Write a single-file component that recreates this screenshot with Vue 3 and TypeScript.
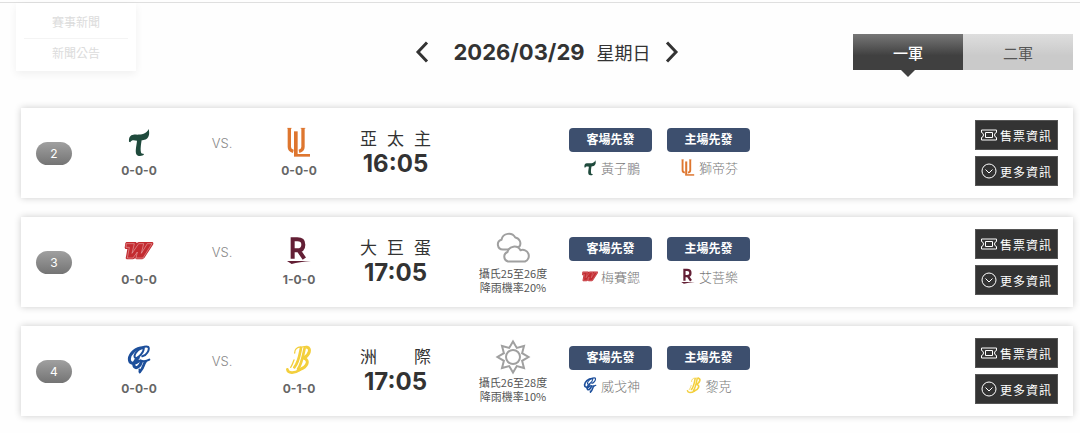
<script setup lang="ts">
import { ref } from 'vue'

type Team = 'tsg' | 'lions' | 'dragons' | 'monkeys' | 'guardians' | 'brothers'

interface Side {
  team: Team
  name: string
  record: string
  pitcher: string
}

interface Game {
  no: number
  away: Side
  home: Side
  venue: string
  time: string
  weather?: { icon: 'cloud' | 'sun'; temp: string; rain: string }
}

const games: Game[] = [
  {
    no: 2,
    away: { team: 'tsg', name: '台鋼雄鷹', record: '0-0-0', pitcher: '黃子鵬' },
    home: { team: 'lions', name: '統一獅', record: '0-0-0', pitcher: '獅帝芬' },
    venue: '亞太主',
    time: '16:05',
  },
  {
    no: 3,
    away: { team: 'dragons', name: '味全龍', record: '0-0-0', pitcher: '梅賽鍶' },
    home: { team: 'monkeys', name: '樂天桃猿', record: '1-0-0', pitcher: '艾菩樂' },
    venue: '大巨蛋',
    time: '17:05',
    weather: { icon: 'cloud', temp: '攝氏25至26度', rain: '降雨機率20%' },
  },
  {
    no: 4,
    away: { team: 'guardians', name: '富邦悍將', record: '0-0-0', pitcher: '威戈神' },
    home: { team: 'brothers', name: '中信兄弟', record: '0-1-0', pitcher: '黎克' },
    venue: '洲際',
    time: '17:05',
    weather: { icon: 'sun', temp: '攝氏26至28度', rain: '降雨機率10%' },
  },
]

const levels = ['一軍', '二軍']
const level = ref('一軍')
</script>

<template>
  <svg class="defs" aria-hidden="true">
    <symbol id="tsg" viewBox="0 0 96 96">
      <path fill="#1f4a3c" d="M77 6C78 12 80 20 77 27C73 38 63 39 56 40C54 52 51 70 55 79C58 81 61 79 63 82C61 87 45 89 41 83C35 74 41 55 42 41C33 39 25 38 22 46L18 44C17 30 22 24 31 23C44 22 68 27 77 6Z" />
    </symbol>
    <symbol id="lions" viewBox="0 0 96 96">
      <g fill="none" stroke="#de762f">
        <path stroke-width="10" d="M19 3V60Q19 70 31 73M60 3V60Q60 70 48 73" />
        <path stroke-width="11" d="M38.500 13V84" />
        <path stroke-width="8" d="M33 85H81" />
        <path stroke-width="2" d="M13 4H26M53 4H67" />
      </g>
    </symbol>
    <symbol id="dragons" viewBox="0 0 96 96">
      <path fill="#c32b30" d="M10 18H39L41 21L47 18H88Q93 19 90 26L64 66L58 70H40L37 67L30 70H11L8 67L13 39H7L5 35L7 21Z" />
      <path fill="none" stroke="#eec0c2" stroke-width="1.500" stroke-linejoin="round" d="M10 23H34L27 52L47 23H62L55 52L73 23H87L60 66H39L43 48L30 66H13L19 34H9Z" />
    </symbol>
    <symbol id="monkeys" viewBox="0 0 96 96">
      <path fill="none" stroke="#631f35" stroke-width="12" d="M29 68V10H43Q61 10 61 26Q61 43 43 43H29M47 43L64 68" />
      <path fill="#631f35" d="M12 75H84Q48 78 26 84Z" />
    </symbol>
    <symbol id="guardians" viewBox="0 0 96 96">
      <g fill="none" stroke="#1d4f9b" stroke-linecap="round" stroke-linejoin="round">
        <path stroke-width="6" d="M58 34C70 32 81 14 76 6C66 1 46 12 38 24C31 36 36 43 46 36C57 27 65 14 61 7" />
        <path stroke-width="9" d="M60 8C38 8 20 26 19 42C19 57 34 59 47 48" />
        <path stroke-width="9" d="M46 38C34 46 29 59 35 66C41 72 52 62 55 51" />
        <path stroke-width="6" d="M52 46C60 50 72 48 79 44" />
        <path stroke-width="8" d="M68 49C60 58 64 66 51 80" />
        <path stroke-width="5" d="M49 73L50 83" />
      </g>
    </symbol>
    <symbol id="brothers" viewBox="0 0 96 96">
      <g fill="none" stroke="#f3cf3c" stroke-linecap="round">
        <path stroke-width="8" d="M54 9C50 29 47 52 34 67M65 9C60 32 57 55 45 72" />
        <path stroke-width="4" d="M35 24C34 13 43 6 53 6C61 8 69 2 73 5" />
        <path stroke-width="9" d="M72 7C85 10 80 29 64 38" />
        <path stroke-width="9" d="M64 40C80 46 74 65 50 74" />
        <path stroke-width="4" d="M33 45C29 56 27 62 23 67" />
        <path stroke-width="8" d="M13 73C15 86 34 86 50 75" />
      </g>
    </symbol>
    <symbol id="cloud" viewBox="0 0 36 36">
      <g fill="#fff" stroke="#a0a0a0" stroke-width="2" stroke-linejoin="round">
        <path d="M8 19.500A5 5 0 0 1 6.500 9.700A7.500 7.500 0 0 1 20.300 7.500A6 6 0 0 1 24.500 16.500L14 19.500Z" />
        <path d="M13 31.500A5 5 0 0 1 12.500 22A7 7 0 0 1 25.500 20.300A5.500 5.500 0 0 1 30 31.500Z" />
      </g>
    </symbol>
    <symbol id="sun" viewBox="0 0 36 36">
      <g fill="none" stroke="#a0a0a0" stroke-width="2">
        <path d="M18 2.500L21.800 8.900L29 7L27.100 14.200L33.500 18L27.100 21.800L29 29L21.800 27.100L18 33.500L14.200 27.100L7 29L8.900 21.800L2.500 18L8.900 14.200L7 7L14.200 8.900Z" />
        <circle cx="18" cy="18" r="7" />
      </g>
    </symbol>
  </svg>

  <div class="page">
    <nav class="submenu" aria-label="新聞">
      <a href="#news">賽事新聞</a>
      <a href="#notice">新聞公告</a>
    </nav>

    <header class="head">
      <div class="date">
        <button class="arrow" aria-label="前一天">
          <svg viewBox="0 0 14 22"><path d="M12 1.500L3 11L12 20.500" /></svg>
        </button>
        <h1>2026/03/29</h1>
        <span class="weekday">星期日</span>
        <button class="arrow" aria-label="後一天">
          <svg viewBox="0 0 14 22"><path d="M2 1.500L11 11L2 20.500" /></svg>
        </button>
      </div>
      <div class="tabs">
        <button v-for="l in levels" :key="l" :class="{ active: l === level }" @click="level = l">{{ l }}</button>
      </div>
    </header>

    <main class="games">
      <article v-for="g in games" :key="g.no" class="game">
        <span class="no">{{ g.no }}</span>
        <div class="team">
          <svg class="logo" role="img" :aria-label="g.away.name"><use :href="'#' + g.away.team" /></svg>
          <span>{{ g.away.record }}</span>
        </div>
        <span class="vs">VS.</span>
        <div class="team">
          <svg class="logo" role="img" :aria-label="g.home.name"><use :href="'#' + g.home.team" /></svg>
          <span>{{ g.home.record }}</span>
        </div>
        <div class="place">
          <div class="venue"><span v-for="c in g.venue" :key="c">{{ c }}</span></div>
          <div class="time">{{ g.time }}</div>
        </div>
        <div class="weather">
          <template v-if="g.weather">
            <svg aria-hidden="true"><use :href="'#' + g.weather.icon" /></svg>
            <span>{{ g.weather.temp }}</span>
            <span>{{ g.weather.rain }}</span>
          </template>
        </div>
        <div class="starters">
          <div class="starter">
            <span class="label">客場先發</span>
            <a href="#player"><svg aria-hidden="true"><use :href="'#' + g.away.team" /></svg>{{ g.away.pitcher }}</a>
          </div>
          <div class="starter">
            <span class="label">主場先發</span>
            <a href="#player"><svg aria-hidden="true"><use :href="'#' + g.home.team" /></svg>{{ g.home.pitcher }}</a>
          </div>
        </div>
        <div class="actions">
          <a href="#ticket">
            <svg viewBox="0 0 18 18"><path d="M1.500 4H16.500V6.500Q14.500 7 14.500 9T16.500 11.500V14H1.500V11.500Q3.500 11 3.500 9T1.500 6.500Z" /><path d="M5.500 6.500H12.500V11.500H5.500Z" /></svg>
            售票資訊
          </a>
          <a href="#more">
            <svg viewBox="0 0 18 18"><circle cx="9" cy="9" r="7" /><path d="M5.500 7.500L9 11L12.500 7.500" /></svg>
            更多資訊
          </a>
        </div>
      </article>
    </main>
  </div>
</template>

<style>
body {
  background: #fefefe;
}
</style>

<style scoped>
.defs {
  position: absolute;
  width: 0;
  height: 0;
}
.page {
  position: relative;
  margin-top: 2px;
  padding: 31px 7px 17px 21px;
  border-top: 1px solid #dfdfdf;
  font-family: Inter, "Noto Sans CJK TC", sans-serif;
  color: #333;
}
a {
  color: inherit;
  text-decoration: none;
}
button {
  border: 0;
  padding: 0;
  background: none;
  font: inherit;
  color: inherit;
  cursor: pointer;
}
.submenu {
  position: absolute;
  left: 16px;
  top: 0;
  width: 104px;
  padding: 5px 8px 2px;
  background: #fff;
  box-shadow: 0 3px 8px rgba(0, 0, 0, 0.06);
  font-size: 12px;
  line-height: 30px;
  text-align: center;
  color: #dcdcdc;
}
.submenu a {
  display: block;
}
.submenu a + a {
  border-top: 1px solid #f4f4f4;
}
.head {
  display: grid;
  grid-template-columns: 1fr auto 1fr;
  align-items: center;
  margin-bottom: 38px;
}
.date {
  grid-column: 2;
  display: flex;
  align-items: center;
}
.date h1 {
  margin: 0 12px 0 24px;
  font-size: 22px;
  line-height: 36px;
  font-weight: 700;
}
.weekday {
  margin-right: 14px;
  font-size: 18px;
}
.arrow {
  display: flex;
}
.arrow svg {
  width: 14px;
  height: 22px;
  fill: none;
  stroke: #333;
  stroke-width: 3;
}
.tabs {
  justify-self: end;
  display: flex;
}
.tabs button {
  position: relative;
  width: 110px;
  height: 36px;
  background: linear-gradient(#dedede, #cacaca 60%);
  font-size: 15px;
  color: #555;
}
.tabs .active {
  background: linear-gradient(#777, #404040 60%);
  color: #fff;
  font-weight: 500;
}
.tabs .active::after {
  content: "";
  position: absolute;
  left: 48px;
  top: 100%;
  border: 7px solid transparent;
  border-top-color: #404040;
  border-bottom: 0;
}
.games {
  display: grid;
  gap: 19px;
}
.game {
  display: grid;
  grid-template-columns: 36px 134px 32px 122px 97px 112px auto 1fr;
  align-items: center;
  min-height: 66px;
  padding: 12px 15px;
  background: #fff;
  box-shadow: 0 0 7px rgba(0, 0, 0, 0.2);
}
.no {
  border-radius: 12px;
  background: linear-gradient(#a0a0a0, #747474);
  font-size: 12px;
  line-height: 23px;
  text-align: center;
  color: #fff;
}
.team {
  display: flex;
  flex-direction: column;
  align-items: center;
  gap: 3px;
  font-size: 12px;
  line-height: 18px;
  font-weight: 700;
  color: #666;
}
.logo {
  width: 32px;
  height: 32px;
}
.vs {
  align-self: start;
  padding-top: 14px;
  font-size: 13px;
  line-height: 18px;
  font-weight: 300;
  text-align: center;
  color: #888;
}
.place {
  width: 71px;
}
.venue {
  display: flex;
  justify-content: space-between;
  font-size: 17px;
  line-height: 24px;
}
.time {
  padding-bottom: 2px;
  font-size: 24px;
  line-height: 26px;
  font-weight: 700;
  text-align: center;
}
.weather {
  display: flex;
  flex-direction: column;
  align-items: center;
  font-family: "Noto Sans CJK TC", sans-serif;
  font-size: 11px;
  line-height: 14px;
  color: #555;
}
.weather svg {
  width: 36px;
  height: 36px;
}
.starters {
  display: flex;
  gap: 15px;
}
.starter {
  width: 83px;
  padding-bottom: 2px;
}
.label {
  display: block;
  margin-bottom: 7px;
  border-radius: 4px;
  background: #3d4f6e;
  font-size: 12px;
  line-height: 24px;
  font-weight: 700;
  text-align: center;
  color: #fff;
}
.starter a {
  display: flex;
  justify-content: center;
  align-items: center;
  gap: 2px;
  font-size: 13px;
  line-height: 18px;
  font-weight: 300;
  color: #777;
}
.starter svg {
  width: 18px;
  height: 18px;
}
.actions {
  justify-self: end;
  display: grid;
  gap: 6px;
}
.actions a {
  display: flex;
  align-items: center;
  box-sizing: border-box;
  width: 83px;
  height: 30px;
  padding-left: 4px;
  gap: 2px;
  border: 1px solid #555;
  background: #333;
  font-size: 12px;
  letter-spacing: 1px;
  white-space: nowrap;
  color: #fff;
}
.actions svg {
  flex: none;
  width: 18px;
  height: 18px;
  fill: none;
  stroke: #fff;
}
</style>
